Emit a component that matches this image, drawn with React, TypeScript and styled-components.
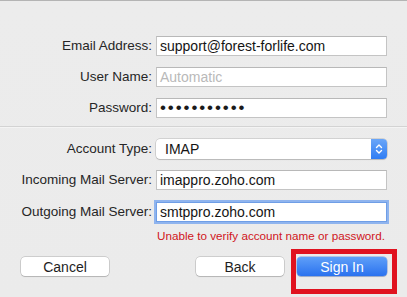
import React from "react";
import styled, { createGlobalStyle } from "styled-components";

const GlobalStyle = createGlobalStyle`
  html, body { margin: 0; padding: 0; background: #ececec; }
  body { font-family: "Liberation Sans", Arial, sans-serif; -webkit-font-smoothing: antialiased; }
`;

const Window = styled.div`
  position: relative;
  width: 407px;
  height: 297px;
  box-sizing: border-box;
  border-top: 1px solid #b4b4b4;
  background: linear-gradient(180deg, #ececec 0%, #ebebeb 100%);
  overflow: hidden;
`;

const Grid = styled.div<{ $top: number }>`
  display: grid;
  grid-template-columns: 152px 231px;
  column-gap: 4px;
  row-gap: 11px;
  padding-top: ${(p) => p.$top}px;
  align-items: center;
`;

const Label = styled.div`
  text-align: right;
  font-size: 13.5px;
  color: #262626;
  line-height: 20px;
  white-space: nowrap;
`;

const Field = styled.div<{ $focused?: boolean; $placeholder?: boolean }>`
  height: 20px;
  box-sizing: border-box;
  background: #fff;
  border: 1px solid ${(p) => (p.$focused ? "#6f9ee6" : "#c4c4c4")};
  border-top-color: ${(p) => (p.$focused ? "#6f9ee6" : "#b8b8b8")};
  padding: 0 3px;
  font-size: 14px;
  line-height: 18px;
  color: ${(p) => (p.$placeholder ? "#b9b9b9" : "#141414")};
  white-space: nowrap;
  overflow: hidden;
  ${(p) => (p.$focused ? "box-shadow: 0 0 0 2px #8fb4ee;" : "")}
`;

const Dots = styled.span`
  font-size: 17px;
  letter-spacing: 1.9px;
  line-height: 18px;
  color: #1a1a1a;
`;

const Divider = styled.div`
  margin-top: 8px;
  height: 1px;
  background: #d3d3d3;
  box-shadow: 0 1px 0 #f4f4f4;
`;

const Select = styled.div`
  position: relative;
  height: 20px;
  box-sizing: border-box;
  background: #fff;
  border-radius: 4px;
  box-shadow: 0 0 0 0.5px rgba(0, 0, 0, 0.22), 0 1px 1px rgba(0, 0, 0, 0.12);
  display: flex;
  align-items: center;
  padding-left: 9px;
  font-size: 14px;
  color: #141414;
`;

const Stepper = styled.div`
  margin-left: auto;
  width: 16px;
  height: 20px;
  border-radius: 0 4px 4px 0;
  background: linear-gradient(180deg, #6aa6f8 0%, #2f7df4 100%);
  display: flex;
  align-items: center;
  justify-content: center;
`;

const ErrorText = styled.div`
  margin: 7px 22px 0 0;
  text-align: right;
  font-size: 11.7px;
  line-height: 14px;
  color: #d0161c;
`;

const ButtonRow = styled.div`
  display: flex;
  align-items: center;
  margin-top: 14px;
  padding-left: 21px;
`;

const Button = styled.div<{ $primary?: boolean; $w: number; $ml?: number }>`
  width: ${(p) => p.$w}px;
  margin-left: ${(p) => p.$ml ?? 0}px;
  height: 19px;
  box-sizing: border-box;
  border-radius: 4px;
  display: flex;
  align-items: center;
  justify-content: center;
  font-size: 14px;
  color: ${(p) => (p.$primary ? "#fff" : "#1e1e1e")};
  background: ${(p) =>
    p.$primary ? "linear-gradient(180deg, #5f9ff8 0%, #2a72ef 100%)" : "#fff"};
  box-shadow: ${(p) =>
    p.$primary
      ? "0 0 0 0.5px rgba(20, 80, 200, 0.5), 0 1px 1px rgba(0,0,0,0.15)"
      : "0 0 0 0.5px rgba(0, 0, 0, 0.25), 0 1px 1px rgba(0,0,0,0.12)"};
`;

const Highlight = styled.div`
  position: absolute;
  left: 291px;
  top: 248px;
  width: 106px;
  height: 45px;
  box-sizing: border-box;
  border: 5px solid #e0121f;
  pointer-events: none;
`;

export default function App() {
  return (
    <>
      <GlobalStyle />
      <Window>
        <Grid $top={35}>
          <Label>Email Address:</Label>
          <Field>support@forest-forlife.com</Field>
          <Label>User Name:</Label>
          <Field $placeholder>Automatic</Field>
          <Label>Password:</Label>
          <Field>
            <Dots>•••••••••••</Dots>
          </Field>
        </Grid>
        <Divider />
        <Grid $top={12}>
          <Label>Account Type:</Label>
          <Select>
            IMAP
            <Stepper>
              <svg width="8" height="12" viewBox="0 0 8 12" fill="none" stroke="#fff" strokeWidth="1.4" strokeLinecap="round" strokeLinejoin="round">
                <path d="M1.5 4.5 L4 2 L6.5 4.5" />
                <path d="M1.5 7.5 L4 10 L6.5 7.5" />
              </svg>
            </Stepper>
          </Select>
          <Label>Incoming Mail Server:</Label>
          <Field>imappro.zoho.com</Field>
          <Label>Outgoing Mail Server:</Label>
          <Field $focused style={{ marginTop: 1 }}>smtppro.zoho.com</Field>
        </Grid>
        <ErrorText>Unable to verify account name or password.</ErrorText>
        <ButtonRow>
          <Button $w={88}>Cancel</Button>
          <Button $w={88} $ml={87}>Back</Button>
          <Button $w={90} $ml={13} $primary>Sign In</Button>
        </ButtonRow>
        <Highlight />
      </Window>
    </>
  );
}
